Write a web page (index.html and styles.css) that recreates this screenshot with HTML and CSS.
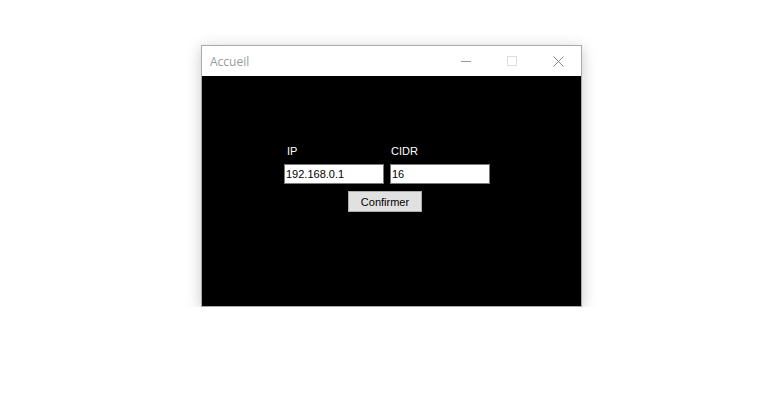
FILE: index.html
```html
<!DOCTYPE html>
<html lang="fr">
<head>
  <meta charset="UTF-8" />
  <title>Accueil</title>
  <link rel="stylesheet" href="styles.css">
</head>
<body>
  <div class="window">
    <div class="titlebar">
      <span class="title">Accueil</span>
      <div class="controls">
        <span class="ctrl">
          <svg width="10" height="10" viewBox="0 0 10 10"><path d="M0 5.5h10" stroke="#999" stroke-width="1"/></svg>
        </span>
        <span class="ctrl">
          <svg width="10" height="10" viewBox="0 0 10 10"><rect x="0.5" y="0.5" width="9" height="9" fill="none" stroke="#ddd" stroke-width="1"/></svg>
        </span>
        <span class="ctrl">
          <svg width="11" height="11" viewBox="0 0 11 11"><path d="M0.5 0.5l10 10M10.5 0.5l-10 10" stroke="#888" stroke-width="1"/></svg>
        </span>
      </div>
    </div>
    <div class="client">
      <form class="form">
        <div class="field">
          <label>IP</label>
          <input value="192.168.0.1" />
        </div>
        <div class="field cidr">
          <label>CIDR</label>
          <input value="16" />
        </div>
        <button type="button">Confirmer</button>
      </form>
    </div>
  </div>
</body>
</html>
```

FILE: styles.css
```css
body {
  margin: 0;
  background: #fff;
  font-family: 'Liberation Sans', Arial, sans-serif;
}
.window {
  width: 379px;
  margin: 45px 0 0 201px;
  border: 1px solid #aaa;
  box-shadow: 0 3px 14px rgba(0,0,0,0.22);
}
.titlebar {
  height: 30px;
  background: #fff;
  display: flex;
  align-items: center;
  justify-content: space-between;
}
.title {
  padding-left: 8px;
  font-family: 'Open Sans', 'Noto Sans', sans-serif;
  font-size: 12px;
  color: #9a9a9a;
}
.controls {
  display: flex;
  height: 100%;
}
.ctrl {
  width: 46px;
  display: flex;
  align-items: center;
  justify-content: center;
}
.client {
  height: 230px;
  background: #000;
  padding-top: 69px;
  box-sizing: border-box;
}
.form {
  display: grid;
  grid-template-columns: 100px 100px;
  column-gap: 6px;
  margin-left: 82px;
  width: 206px;
}
.field label {
  display: block;
  color: #fff;
  font-size: 11px;
  line-height: 13px;
  padding-left: 3px;
  margin-bottom: 6px;
}
.field.cidr label {
  padding-left: 1px;
}
.field input {
  width: 100%;
  height: 20px;
  box-sizing: border-box;
  border: 1px solid #7a7a7a;
  padding: 0 1px;
  font-family: 'Liberation Sans', Arial, sans-serif;
  font-size: 11px;
  color: #000;
  background: #fff;
  outline: none;
}
.form button {
  grid-column: 1 / 3;
  justify-self: start;
  margin: 7px 0 0 64px;
  width: 74px;
  height: 21px;
  background: #e1e1e1;
  border: 1px solid #adadad;
  font-family: 'Liberation Sans', Arial, sans-serif;
  font-size: 11px;
  color: #000;
  padding: 0;
}
```
